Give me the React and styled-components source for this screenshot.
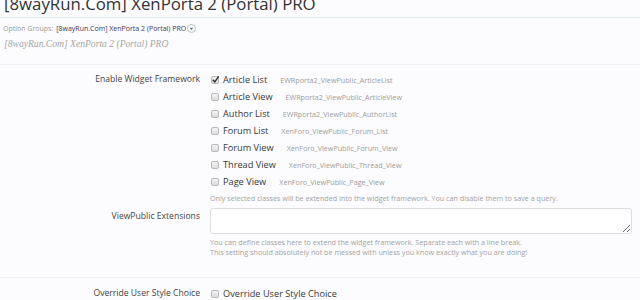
import React from 'react'
import styled, { createGlobalStyle } from 'styled-components'

const GlobalStyle = createGlobalStyle`
  body {
    margin: 0;
    background: #fcfcfe;
    font-family: 'Open Sans', 'DejaVu Sans', sans-serif;
    color: #333;
    overflow: hidden;
  }
`

const Page = styled.div`
  width: 640px;
  height: 300px;
  overflow: hidden;
`

const TitleBar = styled.h1`
  margin: -5px 0 0;
  padding: 0 0 5px 4px;
  font-size: 16.8px;
  line-height: 17px;
  font-weight: normal;
  color: #333;
  border-bottom: 1px solid #e6edf0;
  white-space: nowrap;
`

const GroupLine = styled.div`
  display: flex;
  align-items: center;
  margin-top: 4px;
  padding-left: 3px;
  height: 12px;
  font-size: 7px;
  color: #9a9a9a;
`

const GroupName = styled.span`
  margin-left: 3px;
  color: #3b3b5a;
`

const MenuIcon = styled.svg`
  margin-left: 1px;
  width: 9px;
  height: 9px;
`

const Subtitle = styled.div`
  margin-top: 3px;
  padding: 0 0 13px 4px;
  font-family: 'Liberation Serif', serif;
  font-style: italic;
  font-size: 9.6px;
  line-height: 14px;
  color: #a6a6a6;
  border-bottom: 1px solid #eef1f4;
`

const Section = styled.div`
  padding: ${(p) => p.$pad};
  border-bottom: ${(p) => (p.$divider ? '1px solid #eef1f4' : 'none')};
`

const Row = styled.div`
  display: grid;
  grid-template-columns: 200px 1fr;
  column-gap: 10px;
  padding-right: 8px;
  margin-top: ${(p) => p.$top || 0}px;
`

const Label = styled.div`
  text-align: right;
  font-size: 8.6px;
  line-height: 17px;
  padding-top: ${(p) => p.$top || 0}px;
  color: #444;
  white-space: nowrap;
`

const Options = styled.div`
  display: flex;
  flex-direction: column;
`

const Option = styled.label`
  display: flex;
  align-items: center;
  height: 17px;
  white-space: nowrap;
`

const Box = styled.span`
  position: relative;
  box-sizing: border-box;
  width: 8px;
  height: 8px;
  margin-left: 1px;
  border: 1px solid #b9b9b9;
  border-radius: 2px;
  background: linear-gradient(#f4f4f4, #dcdcdc);
  flex: none;
`

const Tick = styled.svg`
  position: absolute;
  left: -1px;
  top: -2px;
  width: 9px;
  height: 9px;
`

const OptText = styled.span`
  margin-left: 4px;
  font-size: 9.2px;
  color: #383838;
`

const ClassName = styled.span`
  margin-left: 13px;
  font-size: 7.2px;
  color: #9d9d9d;
`

const Hint = styled.div`
  margin-top: ${(p) => p.$top || 0}px;
  font-size: 7.2px;
  line-height: ${(p) => p.$lh || 12}px;
  color: #a3a3a3;
  white-space: nowrap;
`

const TextArea = styled.textarea`
  display: block;
  box-sizing: border-box;
  width: 100%;
  height: 26px;
  margin: 0;
  border: 1px solid #dedede;
  border-radius: 3px;
  background: #fff;
  font-family: inherit;
  font-size: 10px;
`

const widgets = [
  ['Article List', 'EWRporta2_ViewPublic_ArticleList', true],
  ['Article View', 'EWRporta2_ViewPublic_ArticleView'],
  ['Author List', 'EWRporta2_ViewPublic_AuthorList'],
  ['Forum List', 'XenForo_ViewPublic_Forum_List'],
  ['Forum View', 'XenForo_ViewPublic_Forum_View'],
  ['Thread View', 'XenForo_ViewPublic_Thread_View'],
  ['Page View', 'XenForo_ViewPublic_Page_View'],
]

const Check = ({ checked }) => (
  <Box>
    {checked && (
      <Tick viewBox="0 0 10 10">
        <path d="M2 5.2 L4.2 7.6 L8.6 1.6" fill="none" stroke="#333" strokeWidth="1.6" />
      </Tick>
    )}
  </Box>
)

const App = () => (
  <Page>
    <GlobalStyle />
    <TitleBar>[8wayRun.Com] XenPorta 2 (Portal) PRO</TitleBar>
    <GroupLine>
      Option Groups:
      <GroupName>[8wayRun.Com] XenPorta 2 (Portal) PRO</GroupName>
      <MenuIcon viewBox="0 0 10 10">
        <circle cx="5" cy="5" r="4.4" fill="#fff" stroke="#9aa" strokeWidth="0.8" />
        <path d="M3 4.2 L7 4.2 L5 6.6 Z" fill="#667" />
      </MenuIcon>
    </GroupLine>
    <Subtitle>[8wayRun.Com] XenPorta 2 (Portal) PRO</Subtitle>

    <Section $pad="6px 0 20px" $divider>
      <Row>
        <Label>Enable Widget Framework</Label>
        <div>
          <Options>
            {widgets.map(([name, cls, checked]) => (
              <Option key={name}>
                <Check checked={checked} />
                <OptText>{name}</OptText>
                <ClassName>{cls}</ClassName>
              </Option>
            ))}
          </Options>
          <Hint $top={2}>
            Only selected classes will be extended into the widget framework. You can disable them to save a query.
          </Hint>
        </div>
      </Row>
      <Row $top={4}>
        <Label>ViewPublic Extensions</Label>
        <div>
          <TextArea />
          <Hint $top={3} $lh={10}>
            You can define classes here to extend the widget framework. Separate each with a line break.
          </Hint>
          <Hint $lh={10}>
            This setting should absolutely not be messed with unless you know exactly what you are doing!
          </Hint>
        </div>
      </Row>
    </Section>

    <Section $pad="7px 0 0">
      <Row>
        <Label>Override User Style Choice</Label>
        <Option>
          <Check />
          <OptText>Override User Style Choice</OptText>
        </Option>
      </Row>
    </Section>
  </Page>
)

export default App
